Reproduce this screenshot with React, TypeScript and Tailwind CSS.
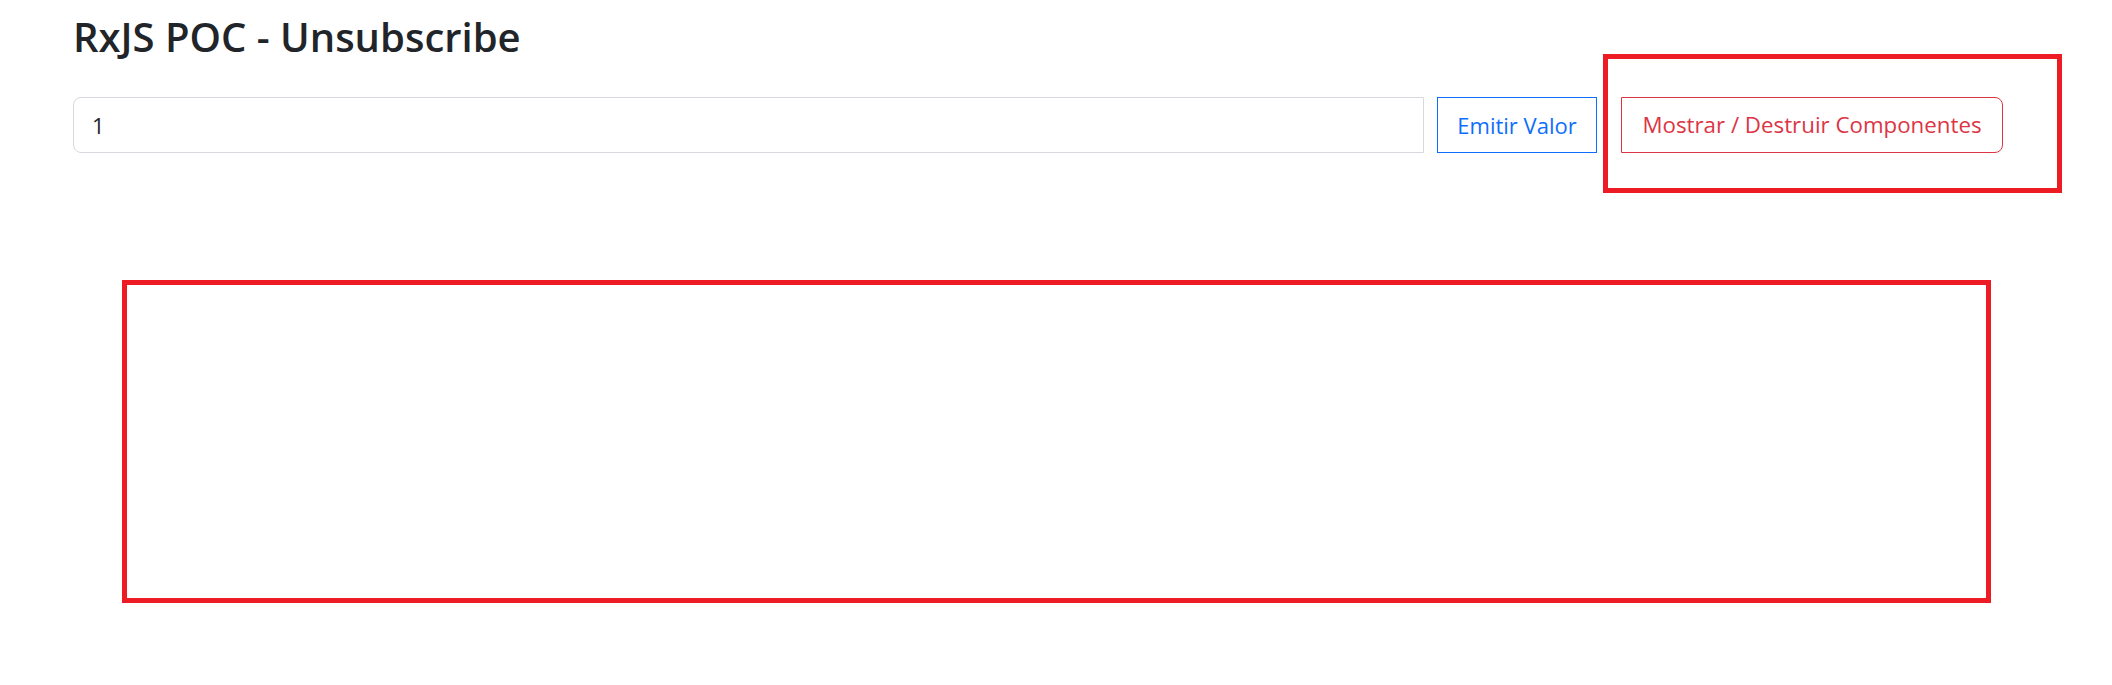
export default function App() {
  return (
    <div
      className="min-h-screen bg-white text-[#212529]"
      style={{ fontFamily: '"Open Sans", "Noto Sans", sans-serif' }}
    >
      <div className="px-[73px] pt-[12px]">
        <h3 className="text-[40px] leading-[50px] font-semibold">
          RxJS POC - Unsubscribe
        </h3>

        <div className="mt-[35px] flex h-[56px] items-stretch">
          <input
            type="text"
            defaultValue="1"
            className="w-[1351px] rounded-l-[8px] border border-[#d6dadf] bg-white px-[18px] text-[22px] text-[#212529] outline-none"
          />
          <button
            type="button"
            className="ml-[13px] w-[160px] border border-[#0d6efd] bg-white text-[22px] text-[#0d6efd]"
          >
            Emitir Valor
          </button>
          <div className="relative ml-[24px]">
            <button
              type="button"
              className="h-full w-[382px] rounded-r-[8px] border border-[#dc3545] bg-white text-[22.3px] text-[#dc3545]"
            >
              Mostrar / Destruir Componentes
            </button>
            {/* annotation frame */}
            <div className="pointer-events-none absolute top-[-43px] right-[-59px] bottom-[-40px] left-[-18px] border-[5px] border-[#ed1c24]" />
          </div>
        </div>

        <div className="mt-[127px] ml-[49px] h-[323px] w-[1869px] border-[5px] border-[#ed1c24]" />
      </div>
    </div>
  );
}
